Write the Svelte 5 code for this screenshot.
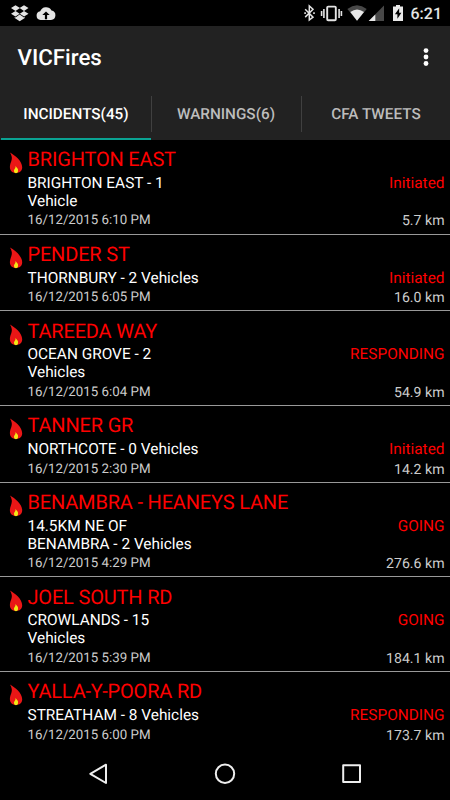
<script>
  const tabs = [
    { label: 'INCIDENTS(45)', active: true },
    { label: 'WARNINGS(6)', active: false },
    { label: 'CFA TWEETS', active: false }
  ];

  const incidents = [
    { title: 'BRIGHTON EAST', lines: ['BRIGHTON EAST - 1', 'Vehicle'], time: '16/12/2015 6:10 PM', status: 'Initiated', distance: '5.7 km' },
    { title: 'PENDER ST', lines: ['THORNBURY - 2 Vehicles'], time: '16/12/2015 6:05 PM', status: 'Initiated', distance: '16.0 km' },
    { title: 'TAREEDA WAY', lines: ['OCEAN GROVE - 2', 'Vehicles'], time: '16/12/2015 6:04 PM', status: 'RESPONDING', distance: '54.9 km' },
    { title: 'TANNER GR', lines: ['NORTHCOTE - 0 Vehicles'], time: '16/12/2015 2:30 PM', status: 'Initiated', distance: '14.2 km' },
    { title: 'BENAMBRA - HEANEYS LANE', lines: ['14.5KM NE OF', 'BENAMBRA - 2 Vehicles'], time: '16/12/2015 4:29 PM', status: 'GOING', distance: '276.6 km' },
    { title: 'JOEL SOUTH RD', lines: ['CROWLANDS - 15', 'Vehicles'], time: '16/12/2015 5:39 PM', status: 'GOING', distance: '184.1 km' },
    { title: 'YALLA-Y-POORA RD', lines: ['STREATHAM - 8 Vehicles'], time: '16/12/2015 6:00 PM', status: 'RESPONDING', distance: '173.7 km' }
  ];
</script>

<div class="screen">
  <div class="status-bar">
    <svg class="notifications" width="50" height="26" viewBox="0 0 50 26" fill="#e4e4e4">
      <path d="M5.5 5.2 10 8 5.5 10.9 1 8.1zM14 5.2 18.5 8.1 14 10.9 9.6 8zM1 13.7 5.5 10.9 9.7 13.8 5.4 16.5zM18.5 13.7 14 10.9 9.8 13.8 14.1 16.5zM9.7 14.6 14 17.4 14.8 16.9V18L9.7 21.2 4.7 18V16.9L5.5 17.4z" />
      <path fill-rule="evenodd" d="M30.5 20a4.4 4.4 0 0 1-.3-8.7A6.2 6.2 0 0 1 41.5 10.5 4.8 4.8 0 0 1 41 20zM34.9 19.2h2.2v-4.3h2.6L36 11.5l-3.7 3.4h2.6z" />
    </svg>
    <svg class="system" width="108" height="26" viewBox="0 0 108 26">
      <path d="M5.2 9.2 13 17.2 9.3 20V6L13 9.3 5.2 17.1" fill="none" stroke="#e4e4e4" stroke-width="1.5" />
      <path d="M4.3 12.3h1.6v1.7H4.3zM13.2 12.3h1.6v1.7h-1.6z" fill="#e4e4e4" />
      <rect x="27.2" y="6.6" width="8.6" height="13.6" rx="1" fill="none" stroke="#e4e4e4" stroke-width="1.9" />
      <path d="M23.9 9v9M21.6 11v5M39.1 9v9M41.4 11v5" stroke="#e4e4e4" stroke-width="1.6" />
      <path d="M47.4 8.9Q57 1.7 66.7 8.9L57 20.8z" fill="#484848" />
      <path d="M50.3 12.1Q57 6.8 64 12.1L57 20.8z" fill="#e9e9e9" />
      <path d="M84 5.5V21H68.7z" fill="#484848" />
      <path d="M75.3 14.5V21h-6.6z" fill="#e9e9e9" />
      <path fill-rule="evenodd" d="M96 5h4v1.4h3V21H93V6.4h3zM99.2 8.3 94.9 14.2h2.5v4.6l4-6h-2.3z" fill="#e9e9e9" />
    </svg>
    <span class="clock">6:21</span>
  </div>

  <header>
    <h1>VICFires</h1>
    <svg width="8" height="22" viewBox="0 0 8 22" fill="#fff">
      <circle cx="4" cy="3.6" r="2.4" />
      <circle cx="4" cy="10" r="2.4" />
      <circle cx="4" cy="16.5" r="2.4" />
    </svg>
  </header>

  <nav class="tabs">
    {#each tabs as tab}
      <div class="tab" class:active={tab.active}><span>{tab.label}</span></div>
    {/each}
  </nav>

  <main>
    {#each incidents as incident}
      <article>
        <svg class="flame" width="14" height="22" viewBox="0 0 14 22">
          <path d="M1 .6C6 3.5 13.2 9 13.2 15.3 13.2 19 10.5 21 7 21 3 21 .7 18.5.9 14.8 1.1 11 3.4 8.4 2.7 4.8 2.4 3.2 1.8 1.8 1 .6z" fill="#ea1616" />
          <path d="M6.5 14Q9.3 16.5 9.1 19.2 8.7 21.3 6.9 21.3 4.8 21.1 4.9 18.8 5.2 17.3 6 16.5 6.7 15.5 6.5 14z" fill="#f2e817" />
        </svg>
        <div class="body">
          <h2>{incident.title}</h2>
          <div class="row">
            <p class="place">{#each incident.lines as line}<span>{line}</span>{/each}</p>
            <span class="state">{incident.status}</span>
          </div>
          <div class="row foot">
            <time>{incident.time}</time>
            <span class="distance">{incident.distance}</span>
          </div>
        </div>
      </article>
    {/each}
  </main>

  <footer>
    <svg width="450" height="55" viewBox="0 0 450 55" fill="none" stroke="#eee" stroke-width="2" stroke-linejoin="round">
      <path d="M106 19.7V38L90.3 28.8z" />
      <circle cx="225" cy="28.7" r="9.2" />
      <rect x="343.2" y="20.2" width="16.8" height="16.8" />
    </svg>
  </footer>
</div>

<style>
  :global(body) {
    margin: 0;
    background: #000;
  }
  .screen {
    width: 450px;
    height: 800px;
    display: flex;
    flex-direction: column;
    overflow: hidden;
    background: #000;
    color: #fff;
    font-family: Roboto, sans-serif;
    text-rendering: geometricPrecision;
  }
  svg {
    display: block;
    flex: none;
  }
  h1, h2, p {
    margin: 0;
  }
  .status-bar {
    flex: none;
    height: 26px;
    display: flex;
    align-items: center;
  }
  .notifications {
    margin-left: 10px;
  }
  .system {
    margin-left: 240px;
  }
  .clock {
    margin-left: 2.5px;
    padding-top: 2px;
    font-size: 16px;
    line-height: 20px;
    font-weight: 500;
    color: #e4e4e4;
  }
  header {
    flex: none;
    height: 64px;
    box-sizing: border-box;
    padding: 0 20px 0 17.5px;
    display: flex;
    align-items: center;
    justify-content: space-between;
    background: #222;
  }
  h1 {
    font-size: 22.3px;
    font-weight: 500;
    line-height: 28px;
  }
  .tabs {
    flex: none;
    height: 50px;
    box-sizing: border-box;
    padding-left: 1px;
    display: flex;
    background: #222;
  }
  .tab {
    flex: 0 0 150px;
    display: flex;
    align-items: center;
    color: #bdbdbd;
    font-size: 15.3px;
    font-weight: 500;
    box-sizing: border-box;
    border-bottom: 2px solid transparent;
  }
  .tab span {
    flex: 1;
    height: 36px;
    line-height: 37px;
    text-align: center;
  }
  .tab + .tab span {
    border-left: 1px solid #404040;
    padding-right: 1px;
  }
  .tab.active {
    color: #fff;
    border-bottom-color: #0aa393;
  }
  main {
    flex: 1;
    min-height: 0;
    overflow: hidden;
  }
  article {
    display: flex;
    padding: 7.2px 5.5px 3.2px 9px;
    border-bottom: 1px solid #999;
  }
  article:last-child {
    border-bottom: 0;
  }
  .flame {
    margin: 5px 4.5px 0 0;
  }
  .body {
    flex: 1;
  }
  h2 {
    font-size: 20px;
    font-weight: 400;
    line-height: 24px;
    letter-spacing: -0.18px;
    color: #f00;
  }
  .row {
    display: flex;
    justify-content: space-between;
    font-size: 15.4px;
    line-height: 18px;
  }
  .row:not(.foot) {
    padding-top: 2.8px;
  }
  .place span {
    display: block;
  }
  .state {
    color: #f00;
  }
  .foot {
    padding-top: 2.5px;
    color: #ccc;
    font-size: 13.3px;
  }
  .distance {
    font-size: 14.1px;
  }
</style>
